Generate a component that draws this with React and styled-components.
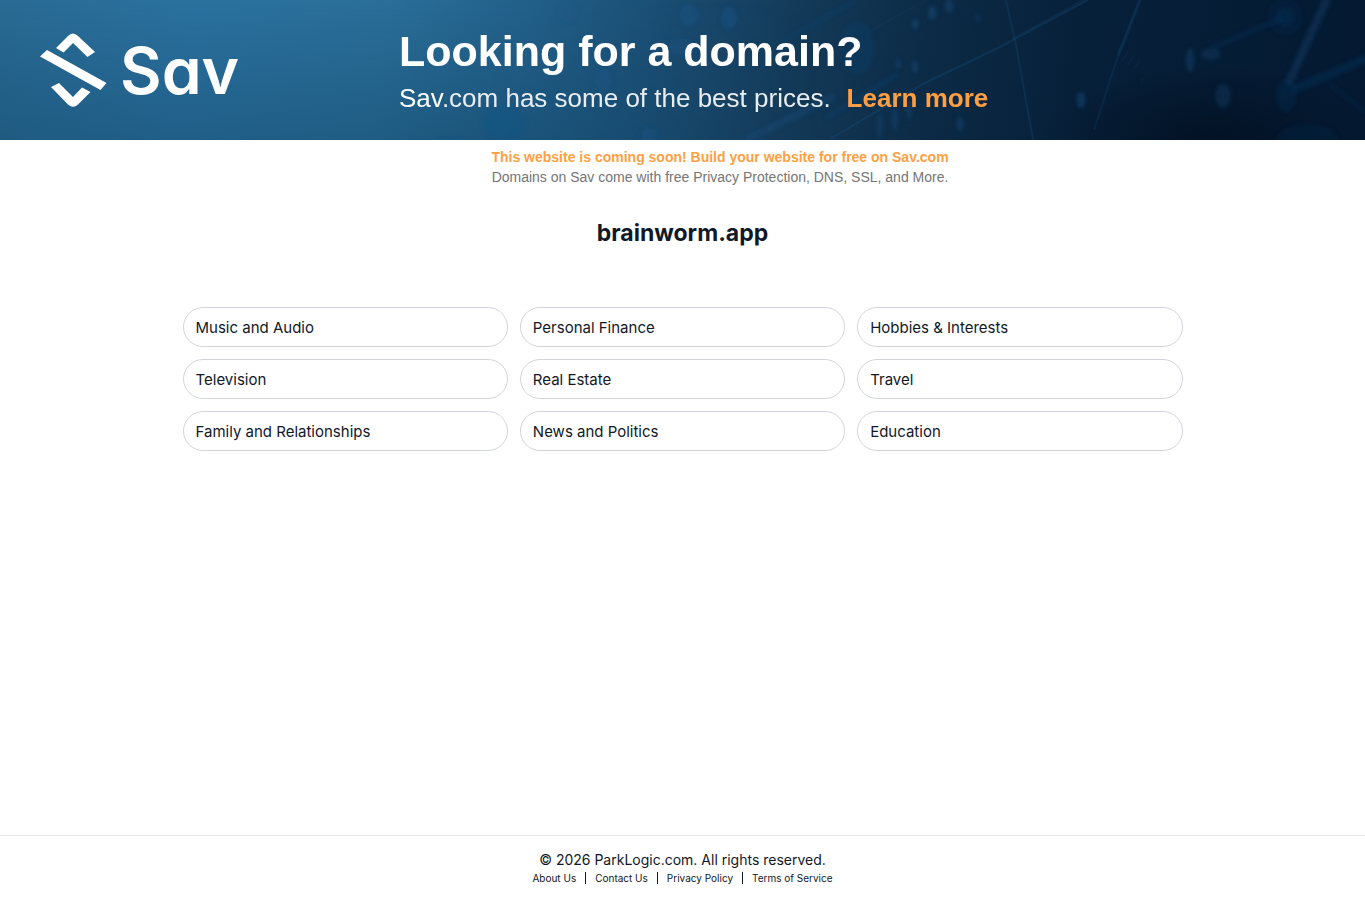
import React from 'react';
import styled, { createGlobalStyle } from 'styled-components';

const GlobalStyle = createGlobalStyle`
  *,
  *::before,
  *::after {
    box-sizing: border-box;
  }

  body {
    margin: 0;
    background: #fff;
    color: #111827;
    font-family: Inter, 'Noto Sans', sans-serif;
    font-size: 15px;
    line-height: 24px;
  }

  a {
    color: inherit;
    text-decoration: none;
  }
`;

const Page = styled.div`
  display: flex;
  flex-direction: column;
  min-height: 100vh;
`;

const Banner = styled.header`
  display: grid;
  height: 140px;
  overflow: hidden;
  background: #071c37;
  color: #fff;
  font-family: Arial, 'Liberation Sans', sans-serif;
`;

const Backdrop = styled.svg`
  grid-area: 1 / 1;
  width: 100%;
  height: 140px;
`;

const BannerContent = styled.div`
  grid-area: 1 / 1;
  display: flex;
  align-items: center;
  gap: 156px;
  padding: 0 40px;
  z-index: 1;
`;

const Logo = styled.svg`
  flex: none;
  width: 203px;
  height: 76px;
  fill: #fff;
`;

const Wordmark = styled.text`
  font-family: Inter, sans-serif;
  font-size: 64px;
  font-weight: 600;
  font-feature-settings: 'cv11';
`;

const BannerText = styled.div`
  padding-top: 6px;
`;

const Title = styled.h1`
  margin: 0;
  font-size: 43px;
  font-weight: 700;
  line-height: 50px;
`;

const Subtitle = styled.p`
  margin: 0;
  color: #e8edf2;
  font-size: 26px;
  line-height: 44px;
`;

const Brand = styled.span`
  color: #fff;
`;

const LearnMore = styled.a`
  && {
    margin-left: 16px;
    color: #ff9f43;
    font-weight: 700;
  }
`;

const Notice = styled.div`
  padding: 7px 0 0 75px;
  color: #757575;
  font-family: Arial, 'Liberation Sans', sans-serif;
  font-size: 14px;
  line-height: 20px;
  text-align: center;

  p {
    margin: 0;
  }
`;

const NoticeLink = styled.a`
  && {
    color: #ff9f43;
    font-weight: 700;
  }
`;

const Main = styled.main`
  flex: 1;
  width: 100%;
  max-width: 1000px;
  margin: 0 auto;
`;

const Domain = styled.h2`
  margin: 30px 0 58px;
  font-size: 23px;
  font-weight: 700;
  line-height: 32px;
  text-align: center;
`;

const Topics = styled.nav`
  display: grid;
  grid-template-columns: repeat(3, 1fr);
  gap: 12px;
`;

const Topic = styled.a`
  padding: 8px 12px 6px;
  border: 1px solid #d1d5db;
  border-radius: 20px;
`;

const Footer = styled.footer`
  padding: 14px 0;
  border-top: 1px solid #e5e7eb;
  font-size: 14px;
  line-height: 20px;
  text-align: center;
`;

const FooterLinks = styled.nav`
  display: flex;
  align-items: center;
  justify-content: center;
  gap: 9px;
  line-height: 16px;

  a {
    font-size: 10px;
  }
`;

const Divider = styled.span`
  width: 1px;
  height: 12px;
  background: #111827;
`;

const topics = [
  'Music and Audio',
  'Personal Finance',
  'Hobbies & Interests',
  'Television',
  'Real Estate',
  'Travel',
  'Family and Relationships',
  'News and Politics',
  'Education',
];

const footerLinks = ['About Us', 'Contact Us', 'Privacy Policy', 'Terms of Service'];

// cx, cy, rx, ry, opacity
const dots = [
  [568, 13, 10, 10, 0.25],
  [689, 15, 9, 11, 0.4],
  [729, 18, 8, 11, 0.45],
  [682, 47, 14, 9, 0.25],
  [603, 79, 9, 11, 0.3],
  [504, 123, 21, 18, 0.22],
  [649, 135, 8, 7, 0.35],
  [450, 145, 14, 9, 0.2],
  [857, 48, 18, 26, 0.15],
  [915, 24, 3, 5, 0.5],
  [932, 13, 4, 7, 0.45],
  [949, 6, 4, 7, 0.4],
  [978, 18, 2, 4, 0.4],
  [898, 64, 2, 6, 0.4],
  [915, 67, 3, 6, 0.45],
  [895, 120, 3, 12, 0.3],
  [880, 126, 3, 14, 0.25],
  [909, 110, 3, 10, 0.3],
  [960, 124, 3, 8, 0.4],
  [1081, 100, 4, 8, 0.45],
  [1190, 60, 4, 12, 0.35],
  [1211, 54, 10, 6, 0.25],
  [1223, 96, 8, 12, 0.25],
  [1285, 17, 9, 9, 0.15],
  [1285, 17, 18, 18, 0.08],
  [1286, 96, 10, 16, 0.14],
  [1307, 142, 32, 18, 0.1],
];

const BannerBackdrop = () => (
  <Backdrop viewBox="0 0 1365 140" preserveAspectRatio="none" aria-hidden="true">
    <defs>
      <linearGradient id="sea" x1="0" y1="0" x2="1365" y2="190" gradientUnits="userSpaceOnUse">
        <stop offset="0" stopColor="#296b94" />
        <stop offset="0.14" stopColor="#2b72a0" />
        <stop offset="0.28" stopColor="#2a6f99" />
        <stop offset="0.38" stopColor="#22608a" />
        <stop offset="0.47" stopColor="#1b4f75" />
        <stop offset="0.57" stopColor="#143b5a" />
        <stop offset="0.67" stopColor="#0c2b46" />
        <stop offset="0.78" stopColor="#07203a" />
        <stop offset="1" stopColor="#041931" />
      </linearGradient>
      <linearGradient id="shade" x1="0" y1="0" x2="0" y2="1">
        <stop offset="0" stopColor="#0d3b5c" stopOpacity="0" />
        <stop offset="1" stopColor="#0d3b5c" stopOpacity="0.35" />
      </linearGradient>
      <linearGradient id="fade">
        <stop offset="0" stopColor="#fff" />
        <stop offset="0.35" stopColor="#fff" />
        <stop offset="0.6" stopColor="#000" />
      </linearGradient>
      <mask id="left">
        <rect width="1365" height="140" fill="url(#fade)" />
      </mask>
      <radialGradient id="deep">
        <stop offset="0" stopColor="#020f20" stopOpacity="0.8" />
        <stop offset="1" stopColor="#020f20" stopOpacity="0" />
      </radialGradient>
      <filter id="soft" x="-20%" y="-20%" width="140%" height="140%">
        <feGaussianBlur stdDeviation="2" />
      </filter>
    </defs>
    <rect width="1365" height="140" fill="url(#sea)" />
    <rect width="1365" height="140" fill="url(#shade)" mask="url(#left)" />
    <ellipse cx="1210" cy="140" rx="170" ry="75" fill="url(#deep)" />
    <g filter="url(#soft)" fill="#17528c">
      {dots.map(([cx, cy, rx, ry, opacity]) => (
        <ellipse key={`${cx}-${rx}`} cx={cx} cy={cy} rx={rx} ry={ry} opacity={opacity} />
      ))}
    </g>
    <g filter="url(#soft)" fill="none" stroke="#14487a">
      <path d="M745 140L835 96" strokeWidth="7" opacity="0.4" />
      <path d="M826 118L898 74" strokeWidth="3" opacity="0.5" />
      <path d="M780 43L855 1" strokeWidth="3" opacity="0.4" />
      <path d="M1288 84L1328 -3" strokeWidth="8" opacity="0.35" />
      <path d="M1292 90L1370 57" strokeWidth="8" opacity="0.25" />
      <path d="M1212 48L1282 18" strokeWidth="4" opacity="0.25" />
      <path d="M1330 84L1365 112" strokeWidth="2" opacity="0.25" />
    </g>
    <g fill="none" stroke="#1b5380">
      <path d="M830 139L925 83L1000 47L1093 -3" strokeWidth="2" opacity="0.3" />
      <path d="M1012 39L1086 -2" strokeWidth="1" opacity="0.3" />
      <path d="M868 32L930 -2" strokeWidth="1" opacity="0.2" />
      <path d="M1006 0L1017 50L1033 140" strokeWidth="2" opacity="0.25" />
      <path d="M1140 0L1118 56" strokeWidth="3" opacity="0.3" />
      <path d="M1118 56L1094 130" strokeWidth="2" opacity="0.2" />
      <path d="M1122 61l6 -10m0 14l6 -10m0 14l6 -9m2 18v6" strokeWidth="1" opacity="0.2" />
    </g>
  </Backdrop>
);

const SavLogo = () => (
  <Logo viewBox="0 0 203 76" role="img" aria-label="Sav">
    <path d="M16 16L28 4Q33 -1 38 4L55 20L47.500 25L33 11L23.500 20.500Z" />
    <path d="M7 18L66.500 51L60.500 58L0 24.500Z" />
    <path d="M11 55L19 51L33 65L42 55.500L50.500 60L38 72.500Q33 77 28 72.500Z" />
    <Wordmark x="80" y="62">Sav</Wordmark>
  </Logo>
);

const App = () => (
  <>
    <GlobalStyle />
    <Page>
      <Banner>
        <BannerBackdrop />
        <BannerContent>
          <SavLogo />
          <BannerText>
            <Title>Looking for a domain?</Title>
            <Subtitle>
              <Brand>Sav</Brand>.com has some of the best prices.
              <LearnMore href="#learn-more">Learn more</LearnMore>
            </Subtitle>
          </BannerText>
        </BannerContent>
      </Banner>
      <Notice>
        <p>
          <NoticeLink href="#build">
            This website is coming soon! Build your website for free on Sav.com
          </NoticeLink>
        </p>
        <p>Domains on Sav come with free Privacy Protection, DNS, SSL, and More.</p>
      </Notice>
      <Main>
        <Domain>brainworm.app</Domain>
        <Topics>
          {topics.map((topic) => (
            <Topic key={topic} href="#topic">{topic}</Topic>
          ))}
        </Topics>
      </Main>
      <Footer>
        <div>© 2026 ParkLogic.com. All rights reserved.</div>
        <FooterLinks>
          {footerLinks.map((label, index) => (
            <React.Fragment key={label}>
              {index > 0 && <Divider />}
              <a href="#footer">{label}</a>
            </React.Fragment>
          ))}
        </FooterLinks>
      </Footer>
    </Page>
  </>
);

export default App;
